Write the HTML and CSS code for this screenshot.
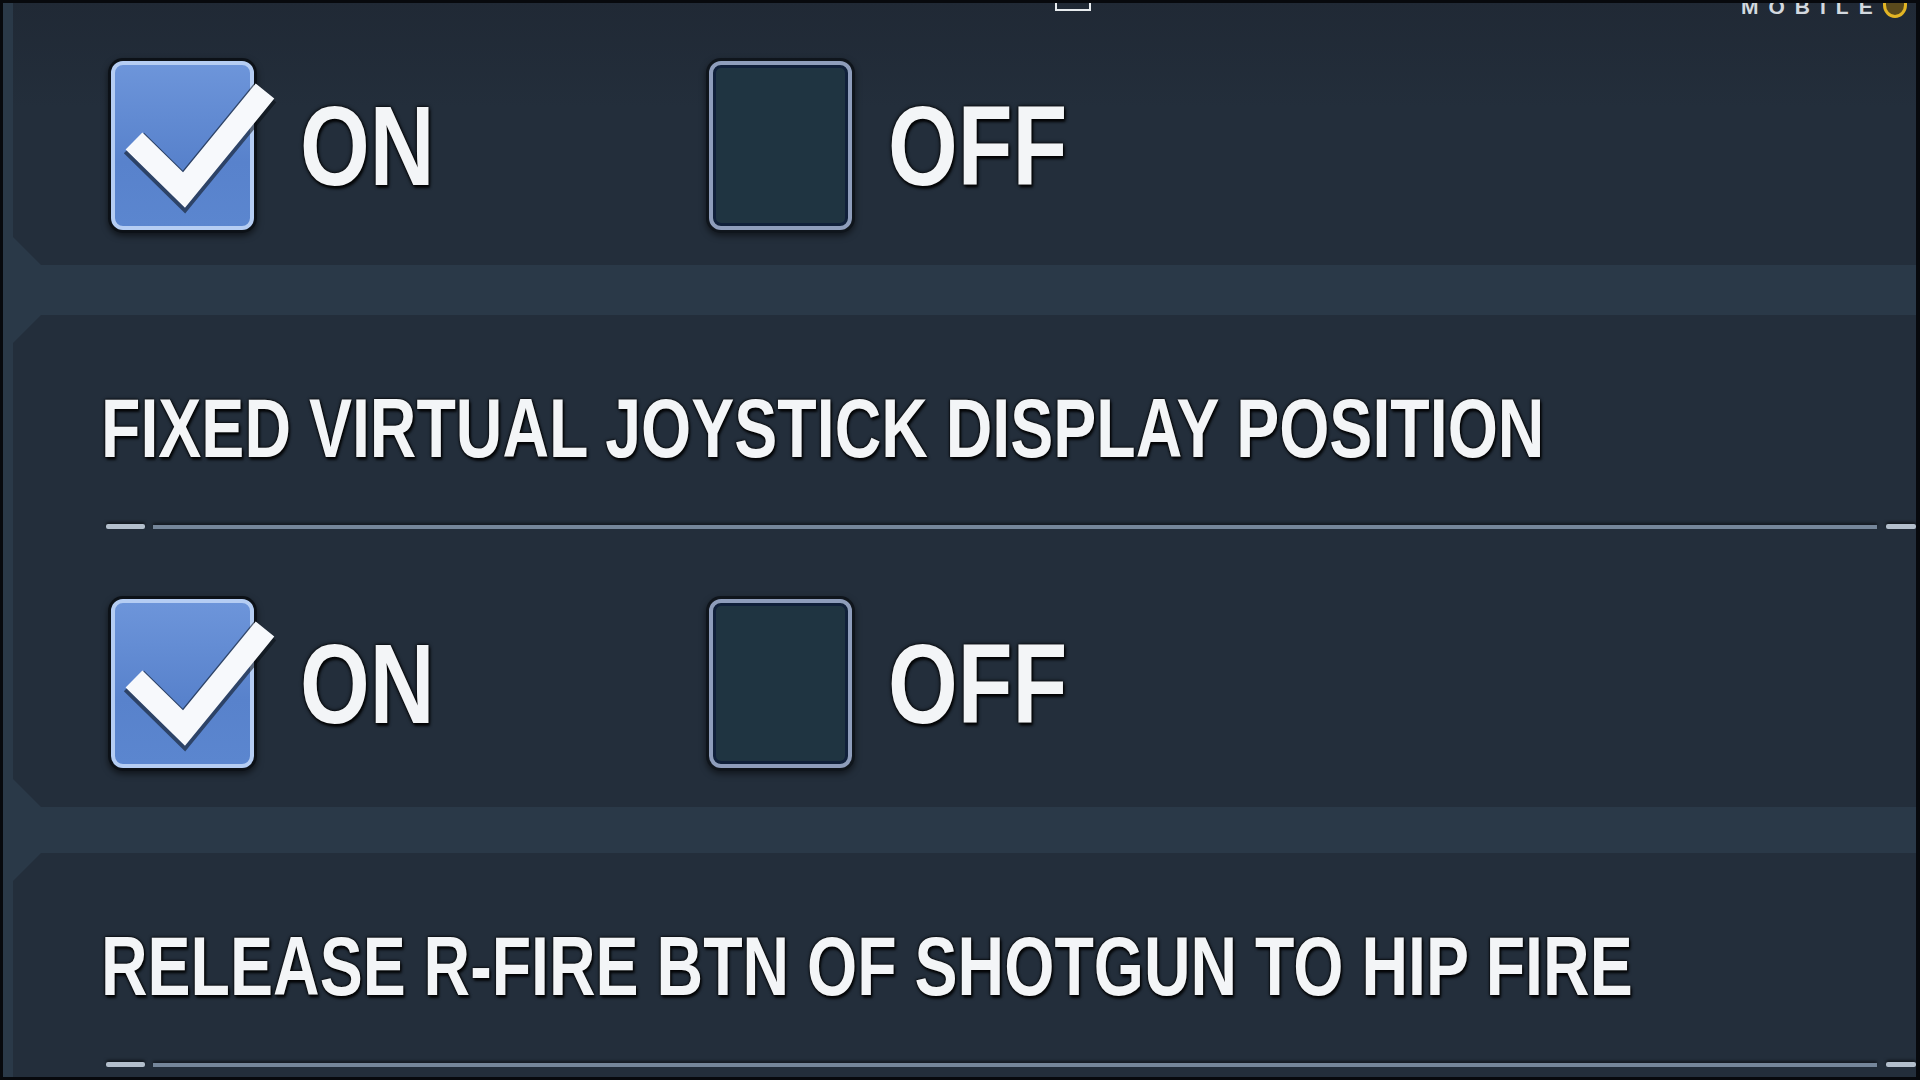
FILE: index.html
```html
<!DOCTYPE html>
<html lang="en">
<head>
<meta charset="utf-8">
<title>Settings</title>
<link rel="stylesheet" href="styles.css">
</head>
<body>
<div class="screen">
  <div class="hud-mark"></div>
  <div class="brand"><span class="brand-text">MOBILE</span><span class="brand-icon"></span></div>

  <section class="panel panel-top">
    <div class="options">
      <div class="option option-on">
        <span class="box box-checked">
          <svg class="tick" viewBox="0 0 134 161" width="134" height="161">
            <path class="tick-shadow" d="M19 78 L69 127 L150 28"/>
            <path class="tick-line" d="M19 76 L69 125 L150 26"/>
          </svg>
        </span>
        <span class="label">ON</span>
      </div>
      <div class="option option-off">
        <span class="box box-empty"></span>
        <span class="label">OFF</span>
      </div>
    </div>
  </section>

  <section class="panel panel-mid">
    <h2 class="title">FIXED VIRTUAL JOYSTICK DISPLAY POSITION</h2>
    <div class="slider"><span class="dash"></span><span class="track"></span><span class="dash dash-end"></span></div>
    <div class="options">
      <div class="option option-on">
        <span class="box box-checked">
          <svg class="tick" viewBox="0 0 134 161" width="134" height="161">
            <path class="tick-shadow" d="M19 78 L69 127 L150 28"/>
            <path class="tick-line" d="M19 76 L69 125 L150 26"/>
          </svg>
        </span>
        <span class="label">ON</span>
      </div>
      <div class="option option-off">
        <span class="box box-empty"></span>
        <span class="label">OFF</span>
      </div>
    </div>
  </section>

  <section class="panel panel-bottom">
    <h2 class="title">RELEASE R-FIRE BTN OF SHOTGUN TO HIP FIRE</h2>
    <div class="slider"><span class="dash"></span><span class="track"></span><span class="dash dash-end"></span></div>
  </section>
</div>
</body>
</html>
```
FILE: styles.css
```css
html, body {
  margin: 0;
  padding: 0;
  background: #080b10;
}

.screen {
  position: relative;
  width: 1920px;
  height: 1080px;
  box-sizing: border-box;
  border-top: 3px solid #07090d;
  border-left: 3px solid #07090d;
  border-right: 4px solid #07090d;
  border-bottom: 3px solid #07090d;
  background: #2a3948;
  padding-left: 10px;
  display: flex;
  flex-direction: column;
  overflow: hidden;
  font-family: "Liberation Sans", Arial, sans-serif;
}

.hud-mark {
  position: absolute;
  z-index: 2;
  top: -22px;
  left: 1052px;
  width: 32px;
  height: 26px;
  border: 2px solid #e8ecef;
}

.brand {
  position: absolute;
  z-index: 2;
  top: -9px;
  left: 1738px;
  display: flex;
  align-items: center;
}

.brand-text {
  font-size: 21px;
  line-height: 1;
  font-weight: bold;
  letter-spacing: 10px;
  color: #d3d9df;
}

.brand-icon {
  width: 18px;
  height: 20px;
  border-radius: 40% 40% 50% 50%;
  border: 3px solid #e3b524;
  background: #5a4a1c;
  margin-top: -2px;
}

.panel {
  background: #232e3b;
  flex: none;
  padding-left: 86px;
  box-sizing: border-box;
}

.panel-top {
  height: 262px;
  padding-top: 58px;
  background: linear-gradient(#202935, #232e3b 40%);
  clip-path: polygon(0 0, 100% 0, 100% 100%, 28px 100%, 0 calc(100% - 28px));
}

.panel-mid {
  height: 492px;
  margin-top: 50px;
  padding-top: 71px;
  clip-path: polygon(28px 0, 100% 0, 100% 100%, 28px 100%, 0 calc(100% - 28px), 0 28px);
}

.panel-bottom {
  flex: 1;
  margin-top: 46px;
  padding-top: 71px;
  clip-path: polygon(28px 0, 100% 0, 100% 100%, 0 100%, 0 28px);
}

.title {
  margin: 0 0 0 2px;
  font-size: 84px;
  line-height: 1;
  font-weight: bold;
  color: #f3f5f7;
  white-space: nowrap;
  transform: scaleX(0.768);
  transform-origin: left center;
  text-shadow: 0 0 2px #000, 0 0 4px #000, 2px 3px 3px rgba(0, 0, 0, 0.8);
}

.slider {
  display: flex;
  align-items: center;
  margin-top: 54px;
  margin-left: 7px;
  height: 5px;
}

.dash {
  width: 39px;
  height: 5px;
  background: #b3bfcc;
  border-radius: 2px;
  box-shadow: 0 -2px 3px rgba(0, 0, 0, 0.5);
}

.track {
  flex: 1;
  height: 4px;
  margin: 0 9px 0 8px;
  background: #75869a;
  box-shadow: 0 -2px 3px rgba(0, 0, 0, 0.45);
}

.dash-end {
  width: 30px;
}

.options {
  display: flex;
  align-items: center;
  padding-left: 12px;
}

.panel-mid .options {
  margin-top: 70px;
}

.option {
  display: flex;
  align-items: center;
}

.option-on {
  width: 598px;
}

.box {
  position: relative;
  width: 143px;
  height: 169px;
  box-sizing: border-box;
  border-radius: 12px;
  flex: none;
}

.box-checked {
  border: 4px solid #b5cdf3;
  background: linear-gradient(#6d95da, #5882cc 60%, #5b86cf);
  box-shadow: 0 0 0 3px #0c1117, 0 3px 6px 3px rgba(0, 0, 0, 0.55);
}

.box-empty {
  border: 4px solid #8e9dbb;
  background: #1f3441;
  box-shadow: inset 0 0 0 3px #10203a, 0 0 0 3px #0f151c, 0 3px 6px 3px rgba(0, 0, 0, 0.5);
}

.tick {
  position: absolute;
  left: 0;
  top: 0;
  overflow: visible;
}

.tick-shadow {
  fill: none;
  stroke: #0a0e14;
  stroke-width: 29;
  stroke-linejoin: miter;
  opacity: 0.55;
}

.tick-line {
  fill: none;
  stroke: #f7f9fc;
  stroke-width: 24;
  stroke-linejoin: miter;
}

.label {
  display: inline-block;
  font-size: 114px;
  line-height: 1;
  font-weight: bold;
  color: #f3f5f7;
  transform: scaleX(0.786);
  transform-origin: left center;
  text-shadow: 0 0 2px #000, 0 0 5px #000, 2px 3px 3px rgba(0, 0, 0, 0.8);
}

.option-on .label {
  margin-left: 46px;
}

.option-off .label {
  margin-left: 36px;
}
```
